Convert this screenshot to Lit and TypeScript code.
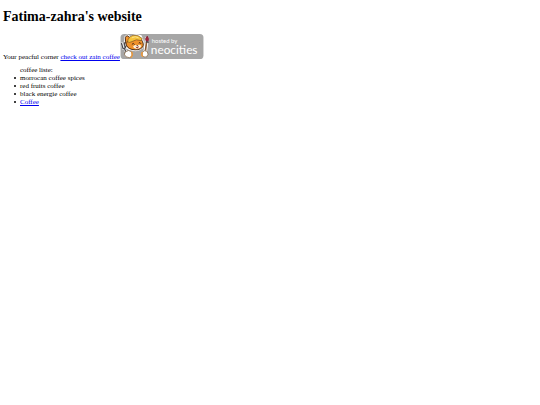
import { LitElement, html, css, svg } from "lit";
import { customElement } from "lit/decorators.js";

const badge = svg`
  <rect width="252" height="76" rx="11" fill="#a6a6a6" />
  <g stroke-linecap="round" stroke-linejoin="round">
    <path d="M4 29 L8 44 M12 26 L15 42 M8 44 Q14 47 17 39 M12 44 L21 62" fill="none" stroke="#fff" stroke-width="7" />
    <path d="M14 22 L13 10 L20 4 L30 9 Q45 -1 62 6 L66 16 Q72 34 66 42 Q56 53 34 48 Q18 45 16 32 Z" fill="#fff" stroke="#fff" stroke-width="5" />
    <path d="M3 29 L7 43 M11 26 L14 42 M7 43 Q13 47 16 38 M12 45 L21 64" fill="none" stroke="#4b4b50" stroke-width="4" />
    <path d="M16 27 L14 10 L20 5 L30 12 Q46 5 62 15 Q74 32 66 41 Q55 51 35 47 Q17 43 16 27 Z" fill="#f0922c" stroke="#4a2c18" stroke-width="3" />
    <path d="M21 24 Q23 8 38 4 Q54 1 66 14 L63 20 Q47 14 35 23 Q27 28 21 24 Z" fill="#f5c23c" stroke="#79501e" stroke-width="2" />
    <path d="M35 11 Q45 5 54 11" fill="none" stroke="#fbe48a" stroke-width="3" />
    <path d="M38 39 Q42 31 50 34 Q58 30 63 36 Q60 46 48 45 Q40 44 38 39 Z" fill="#fff3df" />
    <path d="M35 31 Q38 25 42 31 M56 27 Q59 23 62 29" fill="none" stroke="#432719" stroke-width="3" />
    <path d="M48 34 L54 34 L51 38 Z" fill="#432719" />
    <path d="M47 40 Q51 46 55 39" fill="#c93c38" stroke="#6b291f" stroke-width="2" />
    <path d="M80 13 L75 55" fill="none" stroke="#fff" stroke-width="11" />
    <path d="M79 25 L75 56" fill="none" stroke="#8a5a34" stroke-width="5" />
    <path d="M78 22 Q72 15 81 6 Q88 13 84 22 Z" fill="#a3243c" stroke="#7a1f30" stroke-width="2" />
    <path d="M78 24 L84 25" stroke="#3d3d42" stroke-width="4" />
    <path d="M15 54 Q25 46 33 54 Q39 68 27 72 Q14 72 12 63 Z" fill="#fff" stroke="#76542f" stroke-width="2" />
    <path d="M34 55 Q38 64 32 71" fill="none" stroke="#f29a36" stroke-width="4" />
    <path d="M67 55 Q73 47 81 53 Q87 62 79 70 Q69 72 66 65 Z" fill="#fff" stroke="#76542f" stroke-width="2" />
    <path d="M66 56 Q62 63 67 68" fill="none" stroke="#f29a36" stroke-width="4" />
  </g>
  <text class="hosted" x="95" y="28">hosted by</text>
  <text class="brand" x="92" y="60">neocities</text>
`;

@customElement("app-root")
export class AppRoot extends LitElement {
  static styles = css`
    :host {
      display: block;
      padding: 9px 3px;
      color: #000;
      background: #fff;
      font: 7px/8px "Liberation Serif", "Times New Roman", serif;
    }
    h1 {
      margin: 0 0 9px;
      font-size: 14px;
      line-height: 16px;
    }
    p {
      margin: 0 0 5px;
    }
    a {
      color: #00e;
      text-decoration: underline;
    }
    .badge {
      width: 84px;
      height: 25px;
      vertical-align: baseline;
    }
    .hosted,
    .brand {
      fill: #fff;
      font-family: Lato, "Open Sans", sans-serif;
    }
    .hosted {
      font-size: 18px;
    }
    .brand {
      font-size: 36px;
    }
    ul {
      margin: 0;
      padding: 0 0 0 17px;
      list-style: none;
    }
    .item::before {
      content: "";
      display: inline-block;
      width: 2px;
      height: 2px;
      margin: 0 4px 0 -6px;
      border-radius: 1px;
      background: #000;
      vertical-align: middle;
    }
  `;

  private items = ["morrocan coffee spices", "red fruits coffee", "black energie coffee"];

  render() {
    return html`
      <h1>Fatima-zahra's website</h1>
      <p>
        Your peacful corner
        <a href="#zain">check out zain coffee</a><a href="#neocities" aria-label="Hosted by Neocities"><svg class="badge" viewBox="0 0 252 76">${badge}</svg></a>
      </p>
      <ul>
        <li>coffee liste:</li>
        ${this.items.map((item) => html`<li class="item">${item}</li>`)}
        <li class="item"><a href="#coffee">Coffee</a></li>
      </ul>
    `;
  }
}
